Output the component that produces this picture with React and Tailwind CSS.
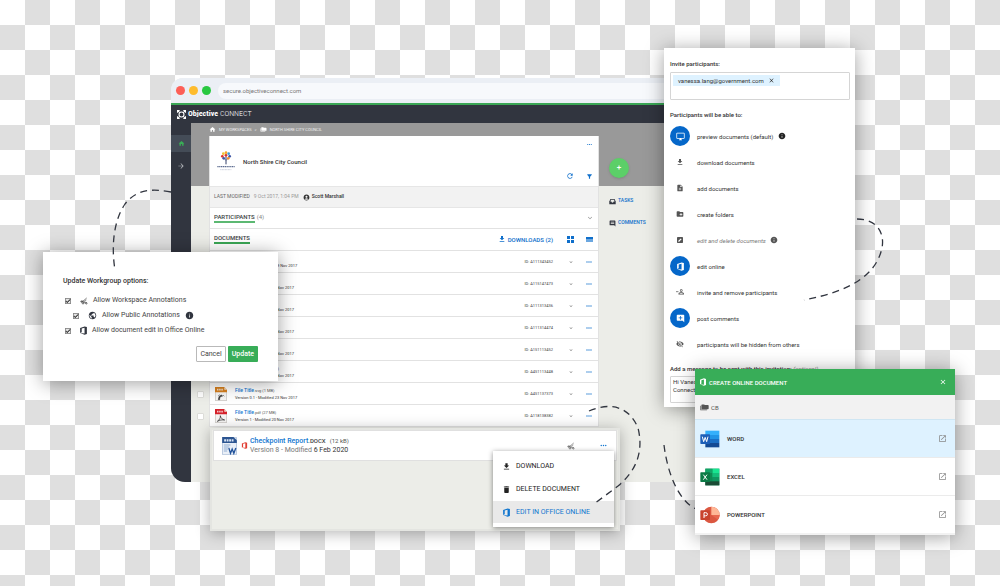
import {
  MdAccountCircle,
  MdAddComment,
  MdArrowForward,
  MdCheck,
  MdClose,
  MdCreateNewFolder,
  MdDelete,
  MdExpandMore,
  MdFileDownload,
  MdFilterAlt,
  MdHome,
  MdInfo,
  MdInsertComment,
  MdMoreHoriz,
  MdNoteAdd,
  MdOpenInNew,
  MdOutlineDesktopWindows,
  MdPublic,
  MdRefresh,
  MdVisibilityOff,
} from "react-icons/md";

function OfficeIcon({ className }) {
  return (
    <svg viewBox="0 0 24 24" className={className} fill="currentColor" aria-hidden="true">
      <path d="M3 18.6V5.4L14.8 1 21 2.9v18.2L14.8 23 3 18.6l11.8 1.5V4.6L7.2 6.4v10.5z" />
    </svg>
  );
}

function AnnotateIcon({ className }) {
  return (
    <svg viewBox="0 0 24 24" className={className} fill="none" stroke="currentColor" strokeWidth="2.2" aria-hidden="true">
      <path d="M2 13c5 1 10-2 18-10M6 14c6 0 9-1 13-5M9 17h11" />
      <circle cx="5" cy="14" r="2.2" />
      <circle cx="9" cy="19" r="2.2" />
      <circle cx="19" cy="19" r="2.2" />
    </svg>
  );
}

function PersonToggleIcon({ className }) {
  return (
    <svg viewBox="0 0 26 24" className={className} fill="currentColor" aria-hidden="true">
      <path d="M0 10h8v2.4H0z" />
      <path
        fillRule="evenodd"
        d="M17 3a4.5 4.5 0 1 1 0 9 4.5 4.5 0 0 1 0-9zm0 2.2a2.3 2.3 0 1 0 0 4.6 2.3 2.3 0 0 0 0-4.6zM8 20v-2.500C8 14.500 14 13 17 13s9 1.500 9 4.500V20zm2.400-2.200h13.200c-.6-1.400-4.200-2.600-6.600-2.600s-6 1.200-6.600 2.600z"
      />
    </svg>
  );
}

function EditBoxIcon({ className }) {
  return (
    <svg viewBox="0 0 24 24" className={className} aria-hidden="true">
      <rect x="3" y="3" width="18" height="18" rx="2" fill="currentColor" />
      <path d="M7 17v-2.600l7.200-7.200 2.600 2.600L9.600 17z" fill="#fff" />
    </svg>
  );
}

function TrayIcon({ className }) {
  return (
    <svg viewBox="0 0 24 24" className={className} aria-hidden="true">
      <path d="M5 3h14l4 9v9H1v-9z" fill="currentColor" />
      <path d="M7 6h10l2.500 6H16a4 4 0 0 1-8 0H4.500z" fill="#ecede8" />
    </svg>
  );
}

function Folders({ className }) {
  return (
    <svg viewBox="0 0 26 20" className={className} fill="currentColor" aria-hidden="true">
      <path d="M1 5v13h19v-2H3V5z" />
      <path d="M6 1h6l2 2h9a2 2 0 0 1 2 2v8a2 2 0 0 1-2 2H6a2 2 0 0 1-2-2V3a2 2 0 0 1 2-2z" />
    </svg>
  );
}

function BrandMark() {
  return (
    <svg viewBox="0 0 20 20" className="size-[9px]" fill="none" stroke="#fff" strokeWidth="2.4" aria-hidden="true">
      <circle cx="10" cy="10" r="5.500" />
      <path d="M1 6V1h5M14 1h5v5M19 14v5h-5M6 19H1v-5M2 2l4 4M18 2l-4 4M18 18l-4-4M2 18l4-4" />
    </svg>
  );
}

function CouncilCrest() {
  return (
    <svg viewBox="0 0 54 60" className="w-[18px] shrink-0" aria-hidden="true">
      <path d="M27 16v24" stroke="#33406b" strokeWidth="3" />
      <path d="M27 28l-7-6M27 28l7-6" stroke="#33406b" strokeWidth="1.500" />
      <circle cx="27" cy="5" r="4" fill="#f5a623" />
      <circle cx="19" cy="8" r="4" fill="#f2c230" />
      <circle cx="35" cy="8" r="4" fill="#3a9bd9" />
      <circle cx="16" cy="16" r="4" fill="#d9342b" />
      <circle cx="38" cy="16" r="4" fill="#3f57a6" />
      <circle cx="27" cy="13" r="4" fill="#d9342b" />
      <circle cx="20" cy="22" r="4" fill="#3f57a6" />
      <circle cx="34" cy="22" r="4" fill="#f08c2e" />
      <path d="M1 47h52" stroke="#5d6c90" strokeWidth="4" strokeDasharray="4 1.500" />
      <path d="M10 56h33" stroke="#a9b1c4" strokeWidth="2" strokeDasharray="3 1.500" />
    </svg>
  );
}

function FileIcon({ color, kind }) {
  return (
    <svg viewBox="0 0 36 42" className="h-3.5 w-3 shrink-0" aria-hidden="true">
      <path d="M1 1h27l7 7v33H1z" fill="#f6f5f4" stroke="#a9a29c" strokeWidth="1.500" />
      <path d="M0 0h28l8 8v8H0z" fill={color} />
      <path d="M28 0v8h8z" fill="#f7e3cf" />
      <path d="M6 8h18" stroke="#fff" strokeWidth="5" strokeDasharray="4.500 2" opacity=".75" />
      {kind === "svg" ? (
        <path d="M10 38c1-8 3-12 9-14l4 3-7 2c-2 3-2 6-2 9zM9 27l6-4M24 24l4 4" stroke="#333" strokeWidth="1.500" fill="#333" />
      ) : (
        <path d="M7 37c6-4 10-10 9-17 1 7 5 11 13 13-8-1-15 0-22 4z" stroke="#222" strokeWidth="2" fill="none" />
      )}
    </svg>
  );
}

function DocxIcon() {
  return (
    <svg viewBox="0 0 44 54" className="h-[18px] w-[15px] shrink-0" aria-hidden="true">
      <path d="M1 1h42v52H1z" fill="#e9eff7" stroke="#9fb4d2" strokeWidth="2" />
      <path d="M0 0h34l10 10v8H0z" fill="#2c5591" />
      <path d="M6 10h28" stroke="#dbe6f5" strokeWidth="7" strokeDasharray="5.500 2" />
      <path d="M5 24h20M5 30h16M5 36h12M5 42h10" stroke="#7f9fcb" strokeWidth="2.500" />
      <path d="M20 33l5 16 5-13 5 13 6-16" stroke="#23549b" strokeWidth="4" fill="none" />
    </svg>
  );
}

function AppTile({ kind }) {
  const box = "h-[18px] w-5 shrink-0";
  if (kind === "word") {
    return (
      <svg viewBox="0 0 60 54" className={box} aria-hidden="true">
        <path d="M16 2h42v13H16z" fill="#35b0fb" />
        <path d="M16 15h42v12H16z" fill="#2294e6" />
        <path d="M16 27h42v12H16z" fill="#1b6fc5" />
        <path d="M16 39h42v13H16z" fill="#134a94" />
        <rect x="1" y="13" width="29" height="29" rx="2" fill="#1d5fb8" />
        <path d="M7 20l4 15 4.500-13L20 35l4-15" stroke="#fff" strokeWidth="3" fill="none" />
      </svg>
    );
  }
  if (kind === "excel") {
    return (
      <svg viewBox="0 0 60 54" className={box} aria-hidden="true">
        <path d="M16 2h42v50H16z" fill="#0e8a52" />
        <path d="M37 2h21v13H37z" fill="#18e591" />
        <path d="M16 2h21v13H16z" fill="#12a366" />
        <path d="M37 15h21v13H37z" fill="#14bd79" />
        <path d="M37 28h21v12H37z" fill="#109560" />
        <path d="M16 40h42v12H16z" fill="#1b4b35" />
        <rect x="1" y="13" width="29" height="29" rx="2" fill="#0b7a45" />
        <path d="M10 20l11 15M21 20L10 35" stroke="#fff" strokeWidth="3" fill="none" />
      </svg>
    );
  }
  return (
    <svg viewBox="0 0 60 54" className={box} aria-hidden="true">
      <circle cx="34" cy="27" r="25" fill="#db5740" />
      <path d="M34 2a25 25 0 0 1 25 25H34z" fill="#ffb796" />
      <path d="M34 27h25a25 25 0 0 1-5 14z" fill="#e8684f" />
      <rect x="1" y="13" width="29" height="29" rx="2" fill="#c8432c" />
      <path d="M12 36V20h5a5 4.500 0 0 1 0 9.500h-5" stroke="#fff" strokeWidth="3" fill="none" />
    </svg>
  );
}

const files = [
  { id: "A111343452", ext: ".pdf (27 MB)", meta: "Version 0.1 - Modified 29 Nov 2017", kind: "pdf" },
  { id: "A115147473", ext: ".pdf (1 MB)", meta: "Version 1 - Modified 20 Nov 2017", kind: "pdf" },
  { id: "A111313436", ext: ".pdf (1 MB)", meta: "Version 1 - Modified 20 Nov 2017", kind: "pdf" },
  { id: "A111314474", ext: ".svg (1 MB)", meta: "Version 1 - Modified 20 Nov 2017", kind: "svg" },
  { id: "A151113452", ext: ".svg (1 MB)", meta: "Version 1 - Modified 20 Nov 2017", kind: "svg" },
  { id: "A451113448", ext: ".docx (27 MB)", meta: "Version 1 - Modified 20 Nov 2017", kind: "svg" },
  { id: "A451137373", ext: ".svg (1 MB)", meta: "Version 0.1 - Modified 23 Nov 2017", kind: "svg" },
  { id: "A118138382", ext: ".pdf (27 MB)", meta: "Version 1 - Modified 20 Nov 2017", kind: "pdf" },
];

function FileRow({ file }) {
  return (
    <li className="flex h-[22px]">
      <div className="flex w-[18px] items-center justify-center">
        <input
          type="checkbox"
          aria-label={`Select ${file.id}`}
          className="size-[7px] appearance-none rounded-[1px] border border-[#dcdcd8] bg-white"
        />
      </div>
      <div className="flex flex-1 items-center border-x border-b border-[#e2e2e2] bg-white pl-[5px] pr-[5px]">
        <FileIcon kind={file.kind} color={file.kind === "pdf" ? "#d5222b" : "#d8811f"} />
        <div className="ml-2 flex-1 text-[4px] leading-[7px] text-[#555]">
          <p>
            <a href="#file" className="text-[5px] font-medium text-[#0f75cf]">File Title</a>
            {file.ext}
          </p>
          <p className="text-[#333]">{file.meta}</p>
        </div>
        <span className="text-[4px] text-[#444]">ID: {file.id}</span>
        <button type="button" aria-label="Expand" className="ml-[15px] text-[#666]">
          <MdExpandMore className="size-[6px]" />
        </button>
        <button type="button" aria-label="More" className="ml-[11px] text-[#0f6fcb]">
          <MdMoreHoriz className="size-2" />
        </button>
      </div>
    </li>
  );
}

function BrowserWindow() {
  return (
    <section className="absolute left-[171px] top-[78px] w-[620px] overflow-hidden rounded-t-xl rounded-b-[14px] bg-[#ecede8]">
      <div className="flex h-[25px] items-center gap-[4px] bg-[#ebeff5] pl-[5px]">
        <i className="size-[9px] rounded-full bg-[#fd5f57]" />
        <i className="size-[9px] rounded-full bg-[#febc2e]" />
        <i className="size-[9px] rounded-full bg-[#28c840]" />
        <label className="ml-[3px] flex h-4 flex-1 items-center rounded-l-full bg-[#f7f9fc] pl-[5px]">
          <input
            aria-label="Address"
            defaultValue="secure.objectiveconnect.com"
            className="w-full bg-transparent text-[6px] leading-4 text-[#777]"
          />
        </label>
      </div>
      <header className="flex h-5 items-center border-t-2 border-[#3aa655] bg-[#31353f] pl-[6px] text-white">
        <BrandMark />
        <p className="ml-[2px] font-['Roboto_Condensed','Liberation_Sans_Narrow','Roboto',sans-serif] text-[8px] leading-4">
          <b>Objective</b> <span className="font-light">CONNECT</span>
        </p>
      </header>
      <div className="flex">
        <nav className="flex w-5 flex-col items-center bg-[#31353f] pt-3">
          <a href="#home" aria-label="Home" className="flex h-[17px] w-full items-center justify-center bg-[#444c57] text-[#3aad57]">
            <MdHome className="size-[7px]" />
          </a>
          <a href="#forward" aria-label="Forward" className="mt-[10px] text-[#b5b8bd]">
            <MdArrowForward className="size-2" />
          </a>
        </nav>
        <main className="flex min-w-0 flex-1 bg-[linear-gradient(#999_63px,#ecede8_0)] pb-[55px]">
          <div className="w-[408px]">
            <nav className="ml-[18px] flex h-[13px] items-center gap-[3px] text-[4px] text-[#f0f0f0]">
              <MdHome className="size-[7px] text-white" />
              <a href="#workspaces">MY WORKSPACES</a>
              <span>&gt;</span>
              <Folders className="h-[5px] w-[7px] text-white" />
              <a href="#council">NORTH SHIRE CITY COUNCIL</a>
            </nav>
            <div className="ml-[18px] border-x border-[#e2e2e2] bg-white">
              <div className="flex h-[50px] items-center pl-[7px] pr-[5px]">
                <CouncilCrest />
                <h1 className="ml-2 flex-1 text-[6px] font-medium text-[#333]">North Shire City Council</h1>
                <div className="flex h-full flex-col items-end justify-between py-[5px] pb-[6px] text-[#0f6fcb]">
                  <button type="button" aria-label="More options"><MdMoreHoriz className="size-[7px]" /></button>
                  <div className="flex gap-[12px]">
                    <button type="button" aria-label="Refresh"><MdRefresh className="size-2" /></button>
                    <button type="button" aria-label="Filter"><MdFilterAlt className="size-[7px]" /></button>
                  </div>
                </div>
              </div>
              <div className="flex h-[22px] items-center border-y border-[#e6e6e6] bg-[#f2f2f2] pl-[4px] text-[5px] text-[#999]">
                <span className="text-[#666]">LAST MODIFIED</span>
                <span className="ml-1">9 Oct 2017, 1:04 PM</span>
                <MdAccountCircle className="ml-[4px] size-[7px] text-[#333]" />
                <span className="ml-[2px] font-medium text-[#333]">Scott Marshall</span>
              </div>
              <div className="flex h-[21px] items-start justify-between border-b border-[#e2e2e2] px-[4px] pt-1 text-[6px] leading-[9px] text-[#888]">
                <h2 className="flex items-start gap-[2px]">
                  <span className="border-b-2 border-[#5cb872] font-medium text-[#3c3f45]">PARTICIPANTS</span>
                  (4)
                </h2>
                <button type="button" aria-label="Expand participants" className="pt-0.5"><MdExpandMore className="size-2" /></button>
              </div>
              <div className="flex h-[22px] items-start border-b border-[#e2e2e2] px-[4px] pt-1 text-[6px] leading-[9px] text-[#0f6fcb]">
                <h2 className="border-b-2 border-[#3aa655] font-medium text-[#3c3f45]">DOCUMENTS</h2>
                <div className="ml-auto flex h-3 items-center">
                  <button type="button" className="flex items-center gap-[2px] font-medium">
                    <MdFileDownload className="size-2" /> DOWNLOADS (2)
                  </button>
                  <button type="button" aria-label="Grid view" className="ml-[14px] grid grid-cols-2 gap-px">
                    <i className="size-[3px] bg-current" /><i className="size-[3px] bg-current" />
                    <i className="size-[3px] bg-current" /><i className="size-[3px] bg-current" />
                  </button>
                  <button type="button" aria-label="List view" className="ml-3 mr-px h-[5px] w-[7px] border-t-2 border-current bg-[#6ba7e0]" />
                </div>
              </div>
            </div>
            <ul>
              {files.map((file) => <FileRow key={file.id} file={file} />)}
            </ul>
          </div>
          <aside className="flex flex-col items-start pl-[10px] pt-[35px] text-[5px] font-medium text-[#0f6fcb]">
            <button type="button" aria-label="Add" className="size-5 rounded-full bg-[#5ccf68] text-[8px] leading-5 text-white shadow">+</button>
            <a href="#tasks" className="mt-[18px] flex h-2.5 items-center gap-[2px]">
              <TrayIcon className="size-[7px] text-[#31353f]" /> TASKS
            </a>
            <a href="#comments" className="mt-3 flex h-2.5 items-center gap-[2px]">
              <MdInsertComment className="size-[7px] text-[#31353f]" /> COMMENTS
            </a>
          </aside>
        </main>
      </div>
    </section>
  );
}

function ReportWindow() {
  return (
    <section className="absolute left-[210px] top-[428px] h-[103px] w-[410px] border-2 border-[#e4e5e1] bg-[#ecede8] shadow-[0_2px_14px_rgba(0,0,0,0.3)]">
      <div className="mx-px flex h-[31px] items-center border border-[#e0e0e0] bg-white pl-2 pr-2">
        <DocxIcon />
        <OfficeIcon className="ml-1 size-[7px] text-[#e03c31]" />
        <div className="ml-[2px] text-[6px] leading-[9px] text-[#777]">
          <p>
            <a href="#report" className="text-[7px] font-medium text-[#0f75cf]">Checkpoint Report</a>
            <span className="font-medium text-[#444]">.DOCX</span>
            <span className="ml-1 text-[#555]">(12 kB)</span>
          </p>
          <p className="text-[7px]">Version 8 - Modified <span className="text-[#333]">6 Feb 2020</span></p>
        </div>
        <button type="button" aria-label="Annotate" className="ml-auto text-[#666]"><AnnotateIcon className="size-2" /></button>
        <button type="button" aria-label="More" className="ml-6 text-[#0f75cf]"><MdMoreHoriz className="size-[9px]" /></button>
      </div>
    </section>
  );
}

function ActionMenu() {
  return (
    <div className="absolute left-[493px] top-[451px] w-[121px] bg-white py-1 text-[7px] text-[#222] shadow-[0_1px_5px_rgba(0,0,0,0.45)]">
      <button type="button" className="flex h-[23px] w-full items-center gap-[5px] pl-[9px]">
        <MdFileDownload className="size-[9px]" /> DOWNLOAD
      </button>
      <button type="button" className="flex h-[23px] w-full items-center gap-[5px] pl-[9px]">
        <MdDelete className="size-[9px]" /> DELETE DOCUMENT
      </button>
      <button type="button" className="flex h-[22px] w-full items-center gap-[5px] bg-[#e9e9e9] pl-[9px] text-[#0f75cf]">
        <OfficeIcon className="size-[9px]" /> EDIT IN OFFICE ONLINE
      </button>
    </div>
  );
}

function Option({ children, className }) {
  return (
    <label className={`flex h-[15px] items-center ${className}`}>
      <span className="relative flex">
        <input type="checkbox" defaultChecked className="size-[6px] appearance-none rounded-[1px] border border-[#bbb] bg-[#e4e4e4]" />
        <MdCheck className="pointer-events-none absolute inset-0 size-[6px] stroke-2 text-[#222]" />
      </span>
      {children}
    </label>
  );
}

function OptionsDialog() {
  return (
    <section className="absolute left-[43px] top-[252px] w-[235px] bg-white px-5 pb-[19px] pt-[25px] text-[7px] text-[#444] shadow-[0_2px_18px_rgba(0,0,0,0.38)]">
      <h2 className="mb-2 leading-2 font-medium text-[#333]">Update Workgroup options:</h2>
      <Option className="ml-[2px]">
        <AnnotateIcon className="ml-[9px] mr-[5px] size-2" /> Allow Workspace Annotations
      </Option>
      <Option className="ml-[10px]">
        <MdPublic className="ml-[9px] mr-[5px] size-[9px] text-[#31353f]" /> Allow Public Annotations
        <MdInfo className="ml-[5px] size-[9px] text-[#31353f]" />
      </Option>
      <Option className="ml-[2px]">
        <OfficeIcon className="ml-2 mr-1 size-[9px] text-[#31353f]" /> Allow document edit in Office Online
      </Option>
      <div className="mt-2 flex justify-end gap-[2px]">
        <button type="button" className="h-4 rounded-[1px] border border-[#b9b9b9] bg-white px-[3px]">Cancel</button>
        <button type="button" className="h-4 rounded-[1px] bg-[#38ad58] px-1 font-medium text-white">Update</button>
      </div>
    </section>
  );
}

const permissions = [
  { label: "preview documents (default)", Icon: MdOutlineDesktopWindows, on: true, info: true },
  { label: "download documents", Icon: MdFileDownload },
  { label: "add documents", Icon: MdNoteAdd },
  { label: "create folders", Icon: MdCreateNewFolder },
  { label: "edit and delete documents", Icon: EditBoxIcon, dim: true, info: true },
  { label: "edit online", Icon: OfficeIcon, on: true },
  { label: "invite and remove participants", Icon: PersonToggleIcon },
  { label: "post comments", Icon: MdAddComment, on: true },
  { label: "participants will be hidden from others", Icon: MdVisibilityOff },
];

function InvitePanel() {
  return (
    <section className="absolute left-[664px] top-[48px] w-[191px] bg-white pb-1 pl-[6px] pr-[5px] pt-[12px] text-[6px] text-[#333] shadow-[0_2px_18px_rgba(0,0,0,0.38)]">
      <h2 className="leading-2 font-medium">Invite participants:</h2>
      <div className="mt-1 h-7 rounded-[1px] border border-[#d5d5d5] p-[2px]">
        <span className="inline-flex h-[11px] items-center gap-[4px] bg-[#def2ff] px-[5px]">
          vanessa.lang@government.com
          <button type="button" aria-label="Remove recipient"><MdClose className="size-[7px]" /></button>
        </span>
      </div>
      <h2 className="mt-[11px] leading-2 font-medium">Participants will be able to:</h2>
      <ul className="mt-1">
        {permissions.map(({ label, Icon, on, dim, info }) => (
          <li key={label} className="h-[26px]">
            <button type="button" aria-pressed={!!on} className="flex h-full items-center">
              <span
                className={
                  on
                    ? "flex size-5 items-center justify-center rounded-full bg-[#0567c9] text-white"
                    : "flex size-5 items-center justify-center text-[#555]"
                }
              >
                <Icon className={on ? "size-[9px]" : "size-2"} />
              </span>
              <span className={dim ? "ml-[7px] italic text-[#777]" : "ml-[7px]"}>{label}</span>
              {info && <MdInfo className={dim ? "ml-1 size-2 text-[#555]" : "ml-[5px] size-2 text-[#222]"} />}
            </button>
          </li>
        ))}
      </ul>
      <label htmlFor="message" className="mt-2 block leading-2 font-medium">
        Add a message to be sent with this invitation: <span className="font-normal italic text-[#888]">(optional)</span>
      </label>
      <textarea
        id="message"
        defaultValue={"Hi Vanessa,\nConnect"}
        className="mt-[3px] block h-[27px] w-full resize-none rounded-[1px] border border-[#d5d5d5] px-[2px] py-px leading-2"
      />
    </section>
  );
}

function CreateDialog() {
  return (
    <section className="absolute left-[695px] top-[369px] w-[260px] bg-[#f2f2f2] text-[#333] shadow-[0_2px_18px_rgba(0,0,0,0.38)]">
      <header className="flex h-[26px] items-center gap-[2px] bg-[#38ad58] pl-1 pr-2 text-[6px] text-white">
        <OfficeIcon className="size-2" />
        <h2 className="font-medium">CREATE ONLINE DOCUMENT</h2>
        <button type="button" aria-label="Close" className="ml-auto"><MdClose className="size-2" /></button>
      </header>
      <div className="flex h-6 items-center gap-[2px] pl-[5px] text-[6px] text-[#555]">
        <Folders className="h-[7px] w-[9px]" /> CB
      </div>
      <ul className="pb-[2px] text-[6px] font-medium">
        {["word", "excel", "powerpoint"].map((kind) => (
          <li key={kind} className="border-t border-[#ebebeb] bg-white first:border-[#cfe6f3] first:bg-[#def2ff]">
            <button type="button" className="flex h-[37px] w-full items-center pl-[5px] pr-2 uppercase">
              <AppTile kind={kind} />
              <span className="ml-[7px]">{kind}</span>
              <MdOpenInNew className="ml-auto size-[9px] text-[#888]" />
            </button>
          </li>
        ))}
      </ul>
    </section>
  );
}

function Connectors({ paths }) {
  return (
    <svg
      viewBox="0 0 1000 586"
      className="pointer-events-none absolute left-0 top-0 h-[586px] w-[1000px]"
      fill="none"
      stroke="#31353f"
      strokeWidth="1.300"
      strokeDasharray="7 5"
      aria-hidden="true"
    >
      {paths.map((d) => <path key={d} d={d} />)}
    </svg>
  );
}

export default function App() {
  return (
    <div className="relative h-screen overflow-hidden bg-[conic-gradient(#dfdfdf_25%,#fff_0_50%,#dfdfdf_0_75%,#fff_0)] bg-[length:50px_50px] font-['Roboto',sans-serif]">
      <BrowserWindow />
      <ReportWindow />
      <ActionMenu />
      <OptionsDialog />
      <InvitePanel />
      <Connectors
        paths={[
          "M171 192C150 188 136 190 125 204 114 220 111 245 115 270",
          "M589 411C612 401 630 408 638 428 644 452 636 471 618 486L594 504",
          "M857 219C876 219 885 232 882 248 876 275 851 291 804 300",
          "M664 445C667 470 677 500 696 509",
        ]}
      />
      <CreateDialog />
    </div>
  );
}
